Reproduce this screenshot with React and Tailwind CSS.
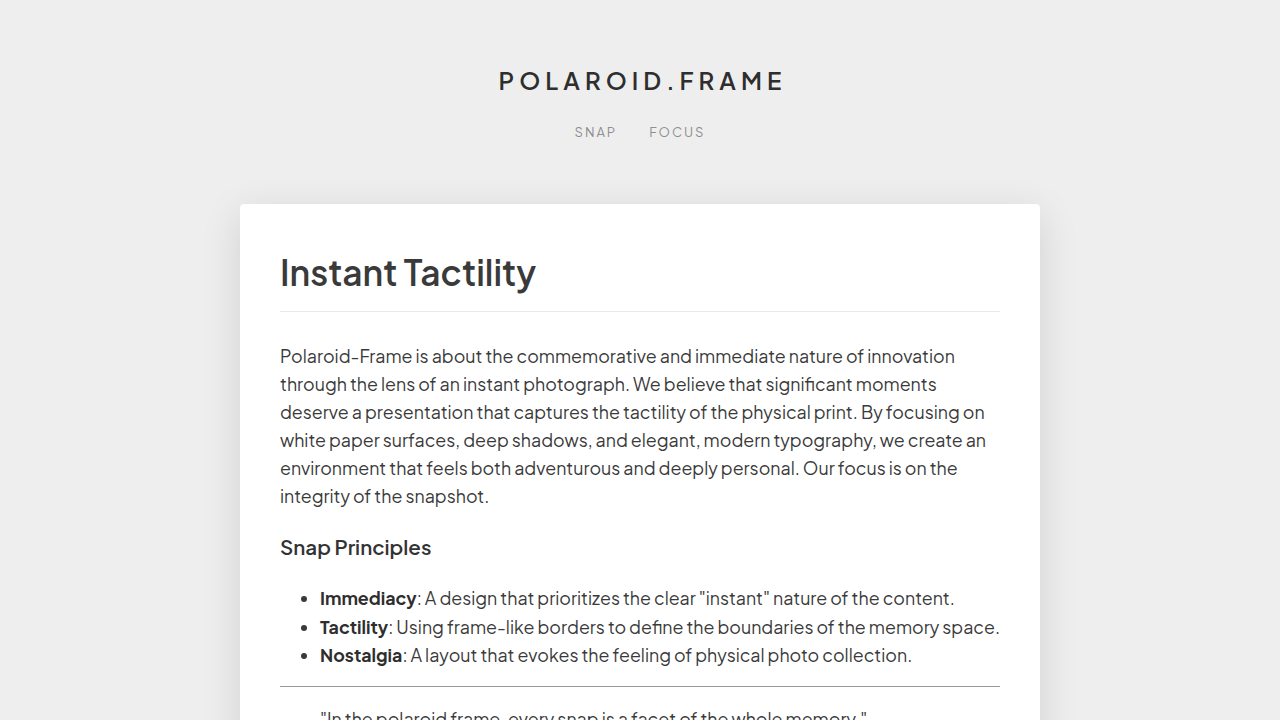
export default function App() {
  const font = { fontFamily: '"Plus Jakarta Sans", Inter, "Noto Sans", sans-serif' };
  return (
    <div className="min-h-screen bg-[#eeeeee] text-[#333333]" style={font}>
      <header className="pt-[60px] flex flex-col items-center">
        <div className="text-[24px] leading-[40px] font-semibold tracking-[0.21em] text-[#2e2e2e] pl-[0.21em]">POLAROID.FRAME</div>
        <nav className="mt-[22px] flex gap-[32px] text-[13px] leading-[20px] tracking-[0.15em] text-[#8f8f8f]">
          <span>SNAP</span>
          <span>FOCUS</span>
        </nav>
      </header>
      <main className="mt-[62px] mx-auto w-[800px] bg-white rounded-[4px] shadow-[0_10px_40px_rgba(0,0,0,0.12)] px-[40px] pt-[40px] pb-[40px]">
        <h1 className="text-[35.2px] leading-[56px] font-semibold text-[#3a3a3a] pb-[11px] border-b border-[#e8e8e8]">Instant Tactility</h1>
        <p className="mt-[30px] text-[17.8px] leading-[28px] text-[#3a3a3a]">
          Polaroid-Frame is about the commemorative and immediate nature of innovation through the lens of an instant photograph. We believe that significant moments deserve a presentation that captures the tactility of the physical print. By focusing on white paper surfaces, deep shadows, and elegant, modern typography, we create an environment that feels both adventurous and deeply personal. Our focus is on the integrity of the snapshot.
        </p>
        <h2 className="mt-[21px] text-[20.5px] leading-[32px] font-semibold text-[#333333]">Snap Principles</h2>
        <ul className="mt-[21px] list-disc pl-[40px] text-[17.8px] leading-[28.5px] text-[#3a3a3a]">
          <li><strong className="font-bold text-[#2e2e2e]">Immediacy</strong>: A design that prioritizes the clear "instant" nature of the content.</li>
          <li><strong className="font-bold text-[#2e2e2e]">Tactility</strong>: Using frame-like borders to define the boundaries of the memory space.</li>
          <li><strong className="font-bold text-[#2e2e2e]">Nostalgia</strong>: A layout that evokes the feeling of physical photo collection.</li>
        </ul>
        <hr className="mt-[16px] border-0 border-t border-[#999999]" />
        <blockquote className="mt-[18px] pl-[40px] text-[17.8px] leading-[28px] text-[#3a3a3a]">
          "In the polaroid frame, every snap is a facet of the whole memory."
        </blockquote>
      </main>
    </div>
  );
}
